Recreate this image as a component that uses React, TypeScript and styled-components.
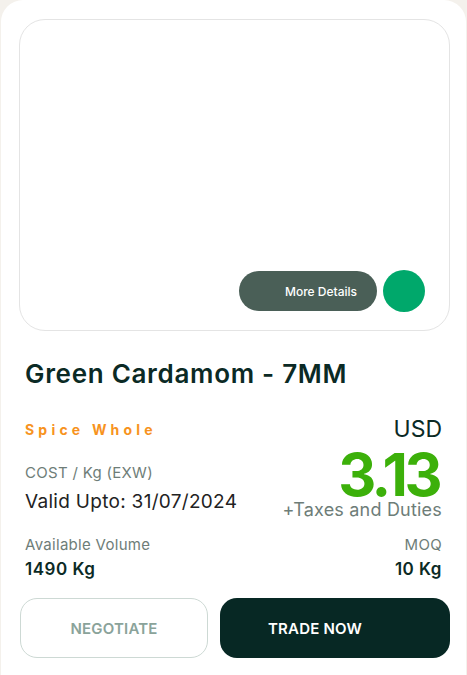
import React from "react";
import styled, { createGlobalStyle } from "styled-components";

const Global = createGlobalStyle`
  html, body { margin: 0; padding: 0; background: #f4f1ec; }
  body { font-family: "Inter", "Noto Sans", sans-serif; }
  * { box-sizing: border-box; }
`;

const Card = styled.div`
  margin-left: 1px;
  width: 465px;
  min-height: 675px;
  background: #ffffff;
  border-radius: 22px 22px 0 0;
  padding: 19px 16px 18px 18px;
  display: flex;
  flex-direction: column;
`;

const ImageArea = styled.div`
  height: 312px;
  border: 1px solid #e4e4e4;
  border-radius: 26px;
  display: flex;
  align-items: flex-end;
  justify-content: flex-end;
  gap: 6px;
  padding: 0 24px 19px 0;
`;

const DetailsPill = styled.button`
  width: 138px;
  height: 40px;
  border: none;
  border-radius: 20px;
  background: #4a5f57;
  color: #ffffff;
  font-family: inherit;
  font-size: 12px;
  font-weight: 500;
  padding: 0 20px 0 0;
  text-align: right;
`;

const Dot = styled.div`
  width: 42px;
  height: 42px;
  border-radius: 50%;
  background: #00a86b;
  margin-bottom: -1px;
`;

const Title = styled.h1`
  margin: 27px 0 0 6px;
  font-size: 26px;
  line-height: 32px;
  font-weight: 600;
  letter-spacing: 0.7px;
  color: #0b2a25;
`;

const PriceBlock = styled.div`
  margin: 29px 8px 0 6px;
  display: flex;
  justify-content: space-between;
`;

const Col = styled.div<{ $right?: boolean }>`
  display: flex;
  flex-direction: column;
  align-items: ${(p) => (p.$right ? "flex-end" : "flex-start")};
`;

const Category = styled.div`
  font-size: 14px;
  line-height: 18px;
  font-weight: 700;
  letter-spacing: 4.2px;
  color: #f7931e;
  margin-top: 2px;
`;

const Label = styled.div<{ $mt?: number }>`
  font-size: 15px;
  line-height: 18px;
  letter-spacing: 0.3px;
  color: #6e7d78;
  margin-top: ${(p) => p.$mt ?? 0}px;
`;

const Valid = styled.div`
  font-size: 19px;
  line-height: 24px;
  letter-spacing: 0.3px;
  color: #222;
  margin-top: 8px;
`;

const Currency = styled.div`
  font-size: 23px;
  line-height: 20px;
  color: #0b2a25;
`;

const Price = styled.div`
  font-size: 59px;
  line-height: 50px;
  font-weight: 700;
  color: #3cb00a;
  letter-spacing: -3.5px;
  margin-top: 11px;
  padding-right: 3px;
`;

const Taxes = styled.div`
  font-size: 18px;
  line-height: 20px;
  letter-spacing: 0.2px;
  color: #6e7d78;
`;

const VolumeRow = styled.div`
  margin: 16px 8px 0 6px;
  display: flex;
  justify-content: space-between;
`;

const Value = styled.div`
  font-size: 17px;
  line-height: 22px;
  font-weight: 600;
  letter-spacing: 0.5px;
  color: #0b2a25;
  margin-top: 4px;
`;

const Actions = styled.div`
  margin-top: 18px;
  display: grid;
  grid-template-columns: 188px 1fr;
  gap: 12px;
  padding-left: 1px;
`;

const Btn = styled.button<{ $primary?: boolean }>`
  height: 60px;
  border-radius: 17px;
  font-family: inherit;
  font-size: 15px;
  font-weight: 600;
  letter-spacing: 0.2px;
  padding: ${(p) => (p.$primary ? "0 40px 0 0" : "0")};
  border: ${(p) => (p.$primary ? "none" : "1px solid #cdd9d4")};
  background: ${(p) => (p.$primary ? "#072824" : "#ffffff")};
  color: ${(p) => (p.$primary ? "#ffffff" : "#8aa39a")};
`;

export default function App() {
  return (
    <>
      <Global />
      <Card>
        <ImageArea>
          <DetailsPill>More Details</DetailsPill>
          <Dot />
        </ImageArea>
        <Title>Green Cardamom - 7MM</Title>
        <PriceBlock>
          <Col>
            <Category>Spice Whole</Category>
            <Label $mt={25}>COST / Kg (EXW)</Label>
            <Valid>Valid Upto: 31/07/2024</Valid>
          </Col>
          <Col $right>
            <Currency>USD</Currency>
            <Price>3.13</Price>
            <Taxes>+Taxes and Duties</Taxes>
          </Col>
        </PriceBlock>
        <VolumeRow>
          <Col>
            <Label>Available Volume</Label>
            <Value>1490 Kg</Value>
          </Col>
          <Col $right>
            <Label>MOQ</Label>
            <Value>10 Kg</Value>
          </Col>
        </VolumeRow>
        <Actions>
          <Btn>NEGOTIATE</Btn>
          <Btn $primary>TRADE NOW</Btn>
        </Actions>
      </Card>
    </>
  );
}
